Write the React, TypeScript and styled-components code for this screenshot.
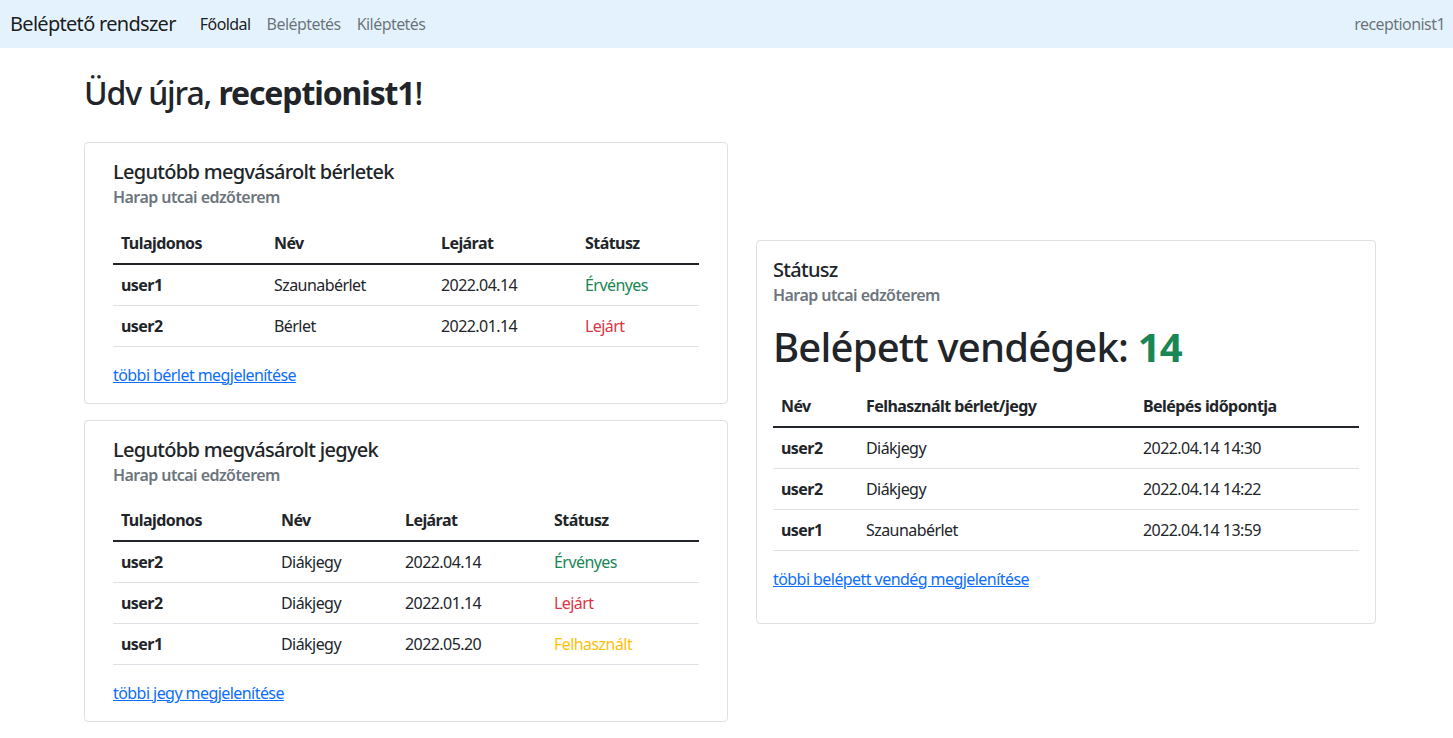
import styled, { createGlobalStyle } from "styled-components";

const GlobalStyle = createGlobalStyle`
  body {
    margin: 0;
    font-family: "Noto Sans", "Open Sans", sans-serif;
    font-size: 16px;
    line-height: 1.5;
    color: #212529;
    background: #fff;
  }
  * {
    box-sizing: border-box;
    letter-spacing: -0.035em;
  }
`;

type Status = "valid" | "expired" | "used";

const statusColor: Record<Status, string> = {
  valid: "#198754",
  expired: "#dc3545",
  used: "#ffc107",
};

const statusLabel: Record<Status, string> = {
  valid: "Érvényes",
  expired: "Lejárt",
  used: "Felhasznált",
};

const passes = [
  { owner: "user1", name: "Szaunabérlet", expiry: "2022.04.14", status: "valid" as Status },
  { owner: "user2", name: "Bérlet", expiry: "2022.01.14", status: "expired" as Status },
];

const tickets = [
  { owner: "user2", name: "Diákjegy", expiry: "2022.04.14", status: "valid" as Status },
  { owner: "user2", name: "Diákjegy", expiry: "2022.01.14", status: "expired" as Status },
  { owner: "user1", name: "Diákjegy", expiry: "2022.05.20", status: "used" as Status },
];

const guests = [
  { name: "user2", pass: "Diákjegy", time: "2022.04.14 14:30" },
  { name: "user2", pass: "Diákjegy", time: "2022.04.14 14:22" },
  { name: "user1", pass: "Szaunabérlet", time: "2022.04.14 13:59" },
];

function App() {
  return (
    <>
      <GlobalStyle />
      <Navbar>
        <Brand>Beléptető rendszer</Brand>
        <NavLinks>
          <NavLink $active>Főoldal</NavLink>
          <NavLink>Beléptetés</NavLink>
          <NavLink>Kiléptetés</NavLink>
        </NavLinks>
        <UserName>receptionist1</UserName>
      </Navbar>

      <Main>
        <Welcome>
          Üdv újra, <strong>receptionist1</strong>!
        </Welcome>

        <Columns>
          <LeftColumn>
            <Card $padX={28}>
              <CardTitle>Legutóbb megvásárolt bérletek</CardTitle>
              <CardSubtitle>Harap utcai edzőterem</CardSubtitle>
              <Table>
                <colgroup>
                  <col style={{ width: 153 }} />
                  <col style={{ width: 167 }} />
                  <col style={{ width: 144 }} />
                  <col />
                </colgroup>
                <thead>
                  <tr>
                    <HeadCell>Tulajdonos</HeadCell>
                    <HeadCell>Név</HeadCell>
                    <HeadCell>Lejárat</HeadCell>
                    <HeadCell>Státusz</HeadCell>
                  </tr>
                </thead>
                <tbody>
                  {passes.map((p, i) => (
                    <tr key={i}>
                      <RowHead>{p.owner}</RowHead>
                      <Cell>{p.name}</Cell>
                      <Cell>{p.expiry}</Cell>
                      <Cell $color={statusColor[p.status]}>{statusLabel[p.status]}</Cell>
                    </tr>
                  ))}
                </tbody>
              </Table>
              <MoreLink href="#">többi bérlet megjelenítése</MoreLink>
            </Card>

            <Card $padX={28}>
              <CardTitle>Legutóbb megvásárolt jegyek</CardTitle>
              <CardSubtitle>Harap utcai edzőterem</CardSubtitle>
              <Table>
                <colgroup>
                  <col style={{ width: 160 }} />
                  <col style={{ width: 124 }} />
                  <col style={{ width: 149 }} />
                  <col />
                </colgroup>
                <thead>
                  <tr>
                    <HeadCell>Tulajdonos</HeadCell>
                    <HeadCell>Név</HeadCell>
                    <HeadCell>Lejárat</HeadCell>
                    <HeadCell>Státusz</HeadCell>
                  </tr>
                </thead>
                <tbody>
                  {tickets.map((t, i) => (
                    <tr key={i}>
                      <RowHead>{t.owner}</RowHead>
                      <Cell>{t.name}</Cell>
                      <Cell>{t.expiry}</Cell>
                      <Cell $color={statusColor[t.status]}>{statusLabel[t.status]}</Cell>
                    </tr>
                  ))}
                </tbody>
              </Table>
              <MoreLink href="#">többi jegy megjelenítése</MoreLink>
            </Card>
          </LeftColumn>

          <Card $padX={16}>
            <CardTitle>Státusz</CardTitle>
            <CardSubtitle>Harap utcai edzőterem</CardSubtitle>
            <GuestCount>
              Belépett vendégek: <strong>14</strong>
            </GuestCount>
            <Table>
              <colgroup>
                <col style={{ width: 85 }} />
                <col style={{ width: 277 }} />
                <col />
              </colgroup>
              <thead>
                <tr>
                  <HeadCell>Név</HeadCell>
                  <HeadCell>Felhasznált bérlet/jegy</HeadCell>
                  <HeadCell>Belépés időpontja</HeadCell>
                </tr>
              </thead>
              <tbody>
                {guests.map((g, i) => (
                  <tr key={i}>
                    <RowHead>{g.name}</RowHead>
                    <Cell>{g.pass}</Cell>
                    <Cell>{g.time}</Cell>
                  </tr>
                ))}
              </tbody>
            </Table>
            <MoreLink href="#" $spaced>
              többi belépett vendég megjelenítése
            </MoreLink>
          </Card>
        </Columns>
      </Main>
    </>
  );
}

const Navbar = styled.nav`
  display: flex;
  align-items: center;
  height: 48px;
  padding: 0 8px 0 10px;
  background: #e3f2fd;
`;

const Brand = styled.a`
  font-size: 20px;
  line-height: 30px;
  color: rgba(0, 0, 0, 0.9);
  margin-right: 16px;
`;

const NavLinks = styled.div`
  display: flex;
  flex: 1;
`;

const NavLink = styled.a<{ $active?: boolean }>`
  padding: 8px;
  font-size: 16px;
  color: ${(p) => (p.$active ? "rgba(0, 0, 0, 0.9)" : "rgba(0, 0, 0, 0.55)")};
`;

const UserName = styled.span`
  color: rgba(0, 0, 0, 0.55);
`;

const Main = styled.main`
  padding: 0 77px 0 84px;
`;

const Welcome = styled.h1`
  margin: 26px 0 30px;
  font-size: 32px;
  font-weight: 500;
  line-height: 1.2;

  strong {
    font-weight: 700;
  }
`;

const Columns = styled.div`
  display: grid;
  grid-template-columns: 644px 620px;
  column-gap: 28px;
  align-items: center;
`;

const LeftColumn = styled.div`
  display: flex;
  flex-direction: column;
  gap: 16px;
`;

const Card = styled.section<{ $padX: number }>`
  border: 1px solid rgba(0, 0, 0, 0.125);
  border-radius: 4px;
  padding: 17px ${(p) => p.$padX}px 16px;
`;

const CardTitle = styled.h5`
  margin: 0 0 8px;
  font-size: 20px;
  font-weight: 500;
  line-height: 1.2;
`;

const CardSubtitle = styled.h6`
  margin: -4px 0 0;
  font-size: 16px;
  font-weight: 600;
  line-height: 1.2;
  color: #6c757d;
`;

const GuestCount = styled.h1`
  margin: 17px 0 13px;
  font-size: 40px;
  font-weight: 500;
  line-height: 1.2;
  letter-spacing: -0.02em;

  strong {
    font-weight: 700;
    color: #198754;
    letter-spacing: -0.02em;
  }
`;

const Table = styled.table`
  width: 100%;
  margin: 15px 0 16px;
  border-collapse: collapse;
  table-layout: fixed;
`;

const HeadCell = styled.th`
  padding: 8px;
  text-align: left;
  font-weight: 700;
  border-bottom: 2px solid #212529;
`;

const RowHead = styled.th`
  padding: 8px;
  text-align: left;
  font-weight: 700;
  border-bottom: 1px solid #dee2e6;
`;

const Cell = styled.td<{ $color?: string }>`
  padding: 8px;
  color: ${(p) => p.$color ?? "#212529"};
  border-bottom: 1px solid #dee2e6;
`;

const MoreLink = styled.a<{ $spaced?: boolean }>`
  display: block;
  width: fit-content;
  color: #0d6efd;
  text-decoration: underline;
  margin-bottom: ${(p) => (p.$spaced ? "16px" : "0")};
`;

export default App;
